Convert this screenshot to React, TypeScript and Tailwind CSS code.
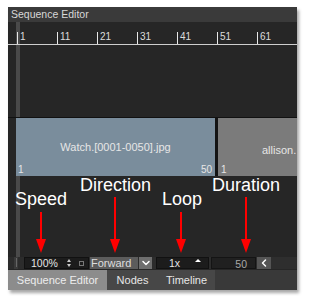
import { ChevronDown, ChevronLeft } from "lucide-react";

const ticks = [1, 11, 21, 31, 41, 51, 61];

const font = { fontFamily: '"Liberation Sans", Arial, sans-serif' };

const App = () => {
  return (
    <div className="w-[311px] h-[296px] bg-white pl-[8px] pt-[7px]" style={font}>
      <div className="w-[289px] h-[283px] bg-[#262626] flex flex-col shadow-[2px_3px_3px_rgba(0,0,0,0.35)] overflow-hidden">
        {/* title */}
        <div className="h-[15px] bg-[#3a3a3a] text-[#d8d8d8] text-[10.5px] leading-[15px] pl-[3px]">Sequence Editor</div>

        <div className="relative flex flex-col flex-1">
          {/* playhead strip */}
          <div className="absolute left-[8px] top-0 w-[4px] h-[235px] bg-[#4a4a4a]" />

          {/* ruler */}
          <div className="relative h-[23px] border-b border-[#cfcfcf] flex items-end pl-[9px]">
            {ticks.map((t) => (
              <div key={t} className="w-[40px] flex items-end h-[12px]">
                <div className="w-px h-full bg-[#e8e8e8]" />
                <span className="text-[10px] leading-[10px] text-[#dcdcdc] pl-[2px] pb-[2px]">{t}</span>
              </div>
            ))}
          </div>

          <div className="h-[72px]" />

          {/* clips */}
          <div className="relative h-[59px] border-t border-[#111] flex pl-[8px]">
            <div className="w-[202px] bg-[#7a8d9c] relative flex items-center justify-center text-[11px] text-[#e6e6e6] border-r-[3px] border-[#141414]">
              <span>Watch.[0001-0050].jpg</span>
              <span className="absolute left-[2px] bottom-[1px] text-[10px] leading-[10px]">1</span>
              <span className="absolute right-[3px] bottom-[1px] text-[10px] leading-[10px]">50</span>
            </div>
            <div className="flex-1 bg-[#7b7b7b] relative text-[11px] text-[#e6e6e6] overflow-hidden">
              <span className="absolute left-[44px] top-[24px] whitespace-nowrap">allison.</span>
              <span className="absolute left-[3px] bottom-[1px] text-[10px] leading-[10px]">1</span>
            </div>
          </div>

          {/* annotations */}
          <div className="relative h-[81px] text-white text-[18px] leading-[18px]">
            <span className="absolute left-[7px] top-[14px]">Speed</span>
            <span className="absolute left-[72px] top-0">Direction</span>
            <span className="absolute left-[154px] top-[14px]">Loop</span>
            <span className="absolute left-[204px] top-0">Duration</span>
            <svg className="absolute inset-0" width="289" height="81" viewBox="0 0 289 81">
              <g fill="#ff0000" stroke="#ff0000" strokeWidth="2">
                <line x1="33" y1="36" x2="33" y2="64" />
                <line x1="107" y1="21" x2="107" y2="64" />
                <line x1="173" y1="36" x2="173" y2="64" />
                <line x1="238" y1="21" x2="238" y2="64" />
              </g>
              <g fill="#ff0000">
                <polygon points="28,63 38,63 33,77" />
                <polygon points="102,63 112,63 107,77" />
                <polygon points="168,63 178,63 173,77" />
                <polygon points="233,63 243,63 238,77" />
              </g>
            </svg>
          </div>

          {/* controls */}
          <div className="h-[12px] flex text-[10.5px] leading-[12px] bg-[#2c2c2c]">
            <div className="w-[16px] flex justify-center">
              <div className="w-[4px] h-full bg-[#3a3a3a] flex justify-center">
                <div className="w-px h-[9px] mt-[1px] bg-[#666]" />
              </div>
            </div>
            <div className="w-[65px] bg-[#1c1c1c] border border-[#111] flex items-center text-[#e6e6e6]">
              <span className="pl-[6px] w-[40px]">100%</span>
              <div className="flex flex-col items-center gap-[2px] w-[8px]">
                <div className="w-0 h-0 border-l-[2px] border-r-[2px] border-b-[3px] border-l-transparent border-r-transparent border-b-[#ccc]" />
                <div className="w-0 h-0 border-l-[2px] border-r-[2px] border-t-[3px] border-l-transparent border-r-transparent border-t-[#ccc]" />
              </div>
              <div className="ml-[6px] w-[5px] h-[5px] border border-[#777]" />
            </div>
            <div className="w-[48px] ml-px bg-[#5c5c5c] text-[#dedede] text-[11px] pl-[1px]">Forward</div>
            <div className="w-[13px] ml-px bg-[#6e6e6e] flex items-center justify-center">
              <ChevronDown className="w-[12px] h-[12px] text-white" strokeWidth={3} />
            </div>
            <div className="w-[53px] ml-[4px] bg-[#1c1c1c] border border-[#111] flex items-center justify-between text-[#e6e6e6]">
              <span className="pl-[12px]">1x</span>
              <div className="mr-[7px] mb-[5px] w-0 h-0 border-l-[3px] border-r-[3px] border-b-[3px] border-l-transparent border-r-transparent border-b-white" />
            </div>
            <div className="w-[45px] ml-[2px] bg-[#202020] border border-[#141414] text-right pr-[8px] text-[#a8a8a8]">50</div>
            <div className="w-[14px] ml-px bg-[#555] flex items-center justify-center">
              <ChevronLeft className="w-[12px] h-[12px] text-white" strokeWidth={3} />
            </div>
            <div className="flex-1 bg-[#2e2e2e]" />
          </div>

          <div className="h-px" />

          {/* tabs */}
          <div className="h-[20px] flex text-[11px] leading-[20px] bg-[#393939]">
            <div className="w-[99px] bg-[#8c8c8c] text-[#ececec] text-center">Sequence Editor</div>
            <div className="w-[51px] bg-[#474747] text-[#e6e6e6] text-center">Nodes</div>
            <div className="w-[57px] bg-[#474747] text-[#e6e6e6] text-center">Timeline</div>
          </div>
        </div>
      </div>
    </div>
  );
};

export default App;
